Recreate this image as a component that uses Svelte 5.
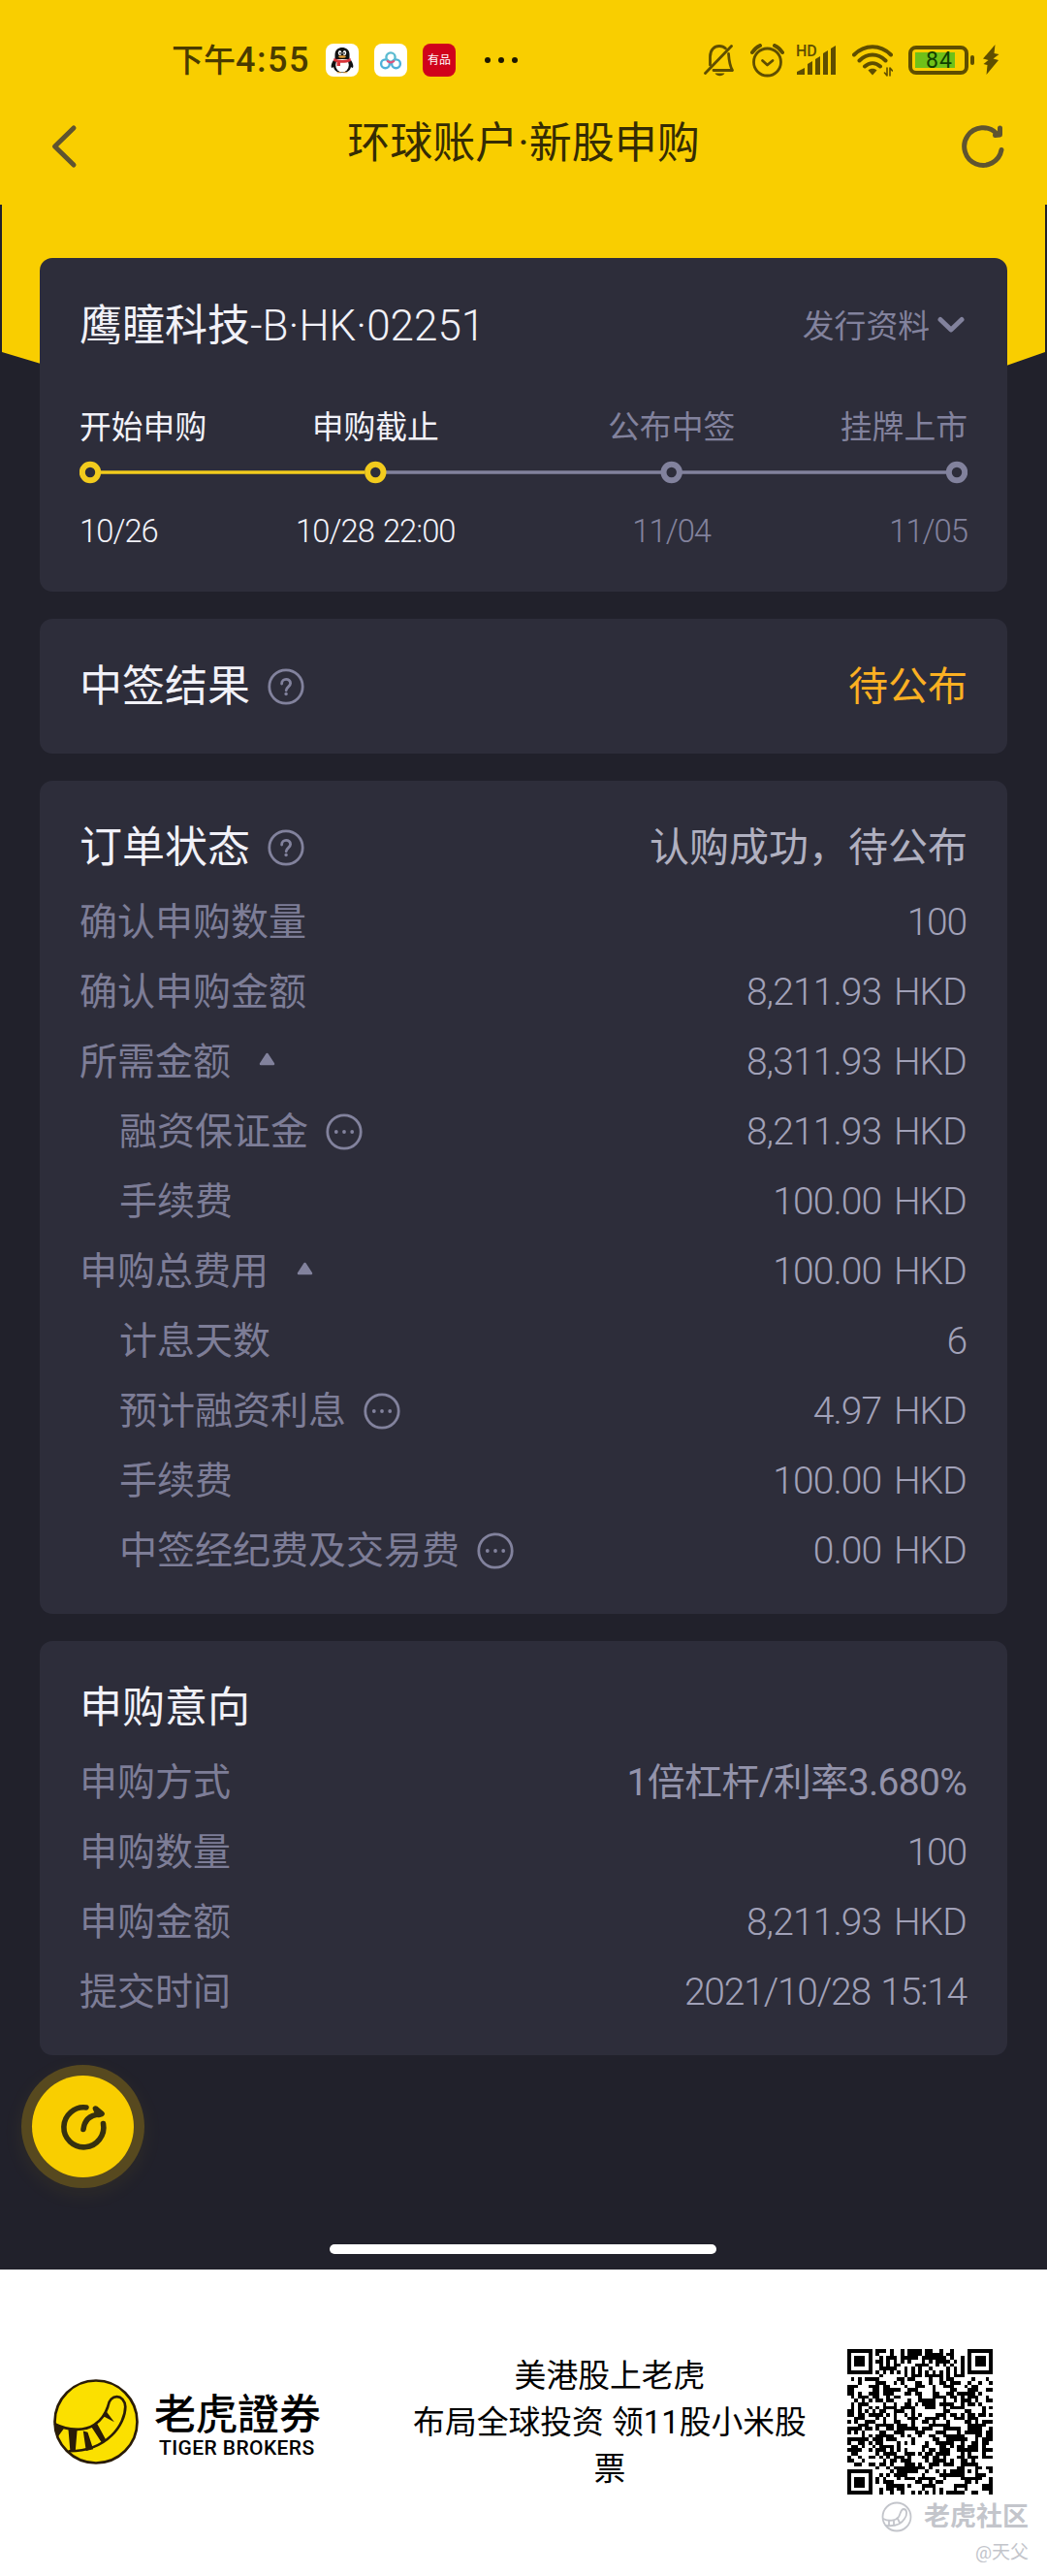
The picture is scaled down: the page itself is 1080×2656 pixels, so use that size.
<script lang="ts">
  interface Step {
    label: string;
    date: string;
    done: boolean;
  }

  interface Row {
    label: string;
    value: string;
    indent?: boolean;
    icon?: 'more' | 'fold';
    kind?: 'amount' | 'text';
  }

  const steps: Step[] = [
    { label: '开始申购', date: '10/26', done: true },
    { label: '申购截止', date: '10/28 22:00', done: true },
    { label: '公布中签', date: '11/04', done: false },
    { label: '挂牌上市', date: '11/05', done: false }
  ];

  const orderRows: Row[] = [
    { label: '确认申购数量', value: '100' },
    { label: '确认申购金额', value: '8,211.93 HKD', kind: 'amount' },
    { label: '所需金额', value: '8,311.93 HKD', kind: 'amount', icon: 'fold' },
    { label: '融资保证金', value: '8,211.93 HKD', kind: 'amount', indent: true, icon: 'more' },
    { label: '手续费', value: '100.00 HKD', kind: 'amount', indent: true },
    { label: '申购总费用', value: '100.00 HKD', kind: 'amount', icon: 'fold' },
    { label: '计息天数', value: '6', indent: true },
    { label: '预计融资利息', value: '4.97 HKD', kind: 'amount', indent: true, icon: 'more' },
    { label: '手续费', value: '100.00 HKD', kind: 'amount', indent: true },
    { label: '中签经纪费及交易费', value: '0.00 HKD', kind: 'amount', indent: true, icon: 'more' }
  ];

  const intentRows: Row[] = [
    { label: '申购方式', value: '1倍杠杆/利率3.680%', kind: 'text' },
    { label: '申购数量', value: '100' },
    { label: '申购金额', value: '8,211.93 HKD', kind: 'amount' },
    { label: '提交时间', value: '2021/10/28 15:14' }
  ];

  const QR_SIZE = 41;

  // square marker made of nested rings, null outside of it
  function marker(x: number, y: number, cx: number, cy: number, outer: number) {
    const d = Math.max(Math.abs(x - cx), Math.abs(y - cy));
    if (d > outer) return null;
    return outer === 4 ? d !== 4 && d !== 2 : d !== 1;
  }

  function isDark(x: number, y: number, noise: number) {
    const last = QR_SIZE - 4;
    const fixed =
      marker(x, y, 3, 3, 4) ??
      marker(x, y, last, 3, 4) ??
      marker(x, y, 3, last, 4) ??
      marker(x, y, 34, 34, 2);
    if (fixed !== null) return fixed;
    if (x === 6 || y === 6) return (x + y) % 2 === 0;
    return noise > 0.5;
  }

  function buildQr() {
    let seed = 2251;
    let path = '';
    for (let y = 0; y < QR_SIZE; y++) {
      for (let x = 0; x < QR_SIZE; x++) {
        seed = (seed * 48271) % 2147483647;
        if (isDark(x, y, seed / 2147483647)) path += `M${x} ${y}h1v1h-1z`;
      }
    }
    return path;
  }

  const qrPath = buildQr();
</script>

{#snippet helpIcon()}
  <svg class="round-icon" viewBox="0 0 38 38">
    <circle cx="19" cy="19" r="17.2" />
    <path d="M14.6 16c0-6 9-6 9-.4 0 3.4-4.4 3.6-4.4 7.2" />
    <circle class="dot" cx="19.1" cy="26.5" r="1.7" />
  </svg>
{/snippet}

{#snippet moreIcon()}
  <svg class="round-icon" viewBox="0 0 38 38">
    <circle cx="19" cy="19" r="17.2" />
    <circle class="dot" cx="10.8" cy="19" r="1.9" />
    <circle class="dot" cx="19" cy="19" r="1.9" />
    <circle class="dot" cx="27.2" cy="19" r="1.9" />
  </svg>
{/snippet}

{#snippet rowList(rows: Row[])}
  {#each rows as row}
    <div class="row">
      <span class="row-label" class:indent={row.indent}>
        {row.label}
        {#if row.icon === 'more'}
          {@render moreIcon()}
        {:else if row.icon === 'fold'}
          <svg class="fold-icon" viewBox="0 0 17 14">
            <path d="M8.5 2 15 12H2z" />
          </svg>
        {/if}
      </span>
      <span class="row-value" class:amount={row.kind === 'amount'} class:text={row.kind === 'text'}>
        {row.value}
      </span>
    </div>
  {/each}
{/snippet}

<div class="screen">
  <div class="hero"></div>

  <div class="status-bar">
    <div class="status-left">
      <span class="time">下午<b>4:55</b></span>
      <span class="app-icon">
        <svg viewBox="0 0 34 34">
          <path d="M8 17c-2 3-3 6-2 8 1 0 2-1 2-1 1 4 4 6 9 6s8-2 9-6c0 0 1 1 2 1 1-2 0-5-2-8z" fill="#111" />
          <ellipse cx="17" cy="22" rx="6.8" ry="7.4" fill="#fff" />
          <path d="M9.5 16V11c0-9.5 15-9.5 15 0v5z" fill="#111" />
          <ellipse cx="14.6" cy="9.5" rx="1.8" ry="2.5" fill="#fff" />
          <ellipse cx="19.4" cy="9.5" rx="1.8" ry="2.5" fill="#fff" />
          <circle cx="15" cy="9.8" r="0.9" fill="#111" />
          <circle cx="19" cy="9.8" r="0.9" fill="#111" />
          <ellipse cx="17" cy="13.5" rx="3.8" ry="1.2" fill="#e9a13a" />
          <path d="M8.5 15c5 2.5 12 2.5 17 0l.5 3c-3 1.5-7 2-11 1.8v3.2h-3.5v-4L8 18z" fill="#d8343a" />
          <path d="M12 29.8h3.5M18.5 29.8H22" stroke="#e9a13a" stroke-width="1" />
        </svg>
      </span>
      <span class="app-icon">
        <svg viewBox="0 0 34 34" fill="none" stroke-width="2.4">
          <circle cx="11.5" cy="20.8" r="4.4" stroke="#4fb0d8" />
          <circle cx="22.5" cy="20.8" r="4.4" stroke="#4fb0d8" />
          <circle cx="17" cy="14" r="4.6" stroke="#5bbbd0" />
          <path d="M13.8 18.2 17 19.5l3.2-1.3" stroke="#e0527c" stroke-width="2.2" />
        </svg>
      </span>
      <span class="app-icon youpin">有品</span>
      <span class="overflow"><i></i><i></i><i></i></span>
    </div>

    <div class="status-right">
      <svg class="bell" width="32" height="34" viewBox="0 0 32 34">
        <path d="M6.5 22V13.5C6.5 6 11 2.5 16 2.5c3 0 5 1 6.5 2.5M25.5 10.5c.5 7 1 12 4 17H10" />
        <path d="M1.5 30.5 28.5 2.5" />
        <path class="solid" d="M11.5 30.5h10c-2 3.5-8 3.5-10 0z" />
      </svg>
      <svg class="alarm" width="35" height="35" viewBox="0 0 35 35">
        <circle cx="17.5" cy="19" r="14" />
        <path d="m12.5 17.5 5 4.5 5.5-4.5" />
        <path class="thick" d="M2 9C4 6 6.5 3.5 10 2M33 9C31 6 28.5 3.5 25 2" />
      </svg>
      <span class="signal">
        <small>HD</small>
        <svg width="42" height="32" viewBox="0 0 42 32">
          <path d="M1 31v-3l8-4v7zM12 20l5-3v14h-5zM20 15l5-3v19h-5zM28 9l5-3v25h-5zM36 4l5-3v30h-5z" />
        </svg>
      </span>
      <svg class="wifi" width="42" height="34" viewBox="0 0 42 34">
        <path d="M2 11.5C13 .5 29 .5 40 11.5M7.5 17.5c8-8 19-8 27 0M13 23.5c5-4.5 11-4.5 16 0" />
        <path class="solid" d="M16.5 27.5c2-2.5 7-2.5 9 0L21 32.5z" />
        <path class="arrows" d="M36 25v8l-2.5-3M39 33v-8l2.5 3" />
      </svg>
      <span class="battery"><span class="charge">84</span></span>
      <svg class="bolt" width="18" height="32" viewBox="0 0 18 32">
        <path d="M13.5 0 1 14.5l5.5 1.5L1.5 20l4 1L4.5 31 17 16l-5.5-1.5L17.5 10l-5-1z" />
      </svg>
    </div>
  </div>

  <div class="nav">
    <svg width="30" height="46" viewBox="0 0 30 46">
      <path d="M25 4 5.5 23l19.5 19" />
    </svg>
    <h1>环球账户·新股申购</h1>
    <svg width="46" height="46" viewBox="0 0 46 46">
      <path d="M41 26.5A19.3 19.3 0 1 1 36 9.8" />
      <path d="M39.5 4v7l-5 .5" />
    </svg>
  </div>

  <main>
    <section class="card stock">
      <div class="stock-head">
        <h2>鹰瞳科技<span class="code">-B·HK·02251</span></h2>
        <span class="link">
          发行资料
          <svg width="28" height="18" viewBox="0 0 28 18"><path d="m3 3.5 11 10.5L25 3.5" /></svg>
        </span>
      </div>
      <div class="steps">
        {#each steps as step}
          <span class:done={step.done}>{step.label}</span>
        {/each}
      </div>
      <svg class="track" width="916" height="24" viewBox="0 0 916 24">
        <path class="done" d="M22 12H294" />
        <path d="M316 12H600M621 12H894" />
        <circle class="done" cx="11" cy="12" r="8.2" />
        <circle class="done" cx="305.3" cy="12" r="8.2" />
        <circle cx="610.7" cy="12" r="8.2" />
        <circle cx="905" cy="12" r="8.2" />
      </svg>
      <div class="steps dates">
        {#each steps as step}
          <span class:done={step.done}>{step.date}</span>
        {/each}
      </div>
    </section>

    <section class="card result">
      <h2>中签结果 {@render helpIcon()}</h2>
      <span class="state pending">待公布</span>
    </section>

    <section class="card">
      <div class="card-head">
        <h2>订单状态 {@render helpIcon()}</h2>
        <span class="state">认购成功，待公布</span>
      </div>
      {@render rowList(orderRows)}
    </section>

    <section class="card">
      <div class="card-head">
        <h2>申购意向</h2>
      </div>
      {@render rowList(intentRows)}
    </section>
  </main>

  <button class="fab" aria-label="切换">
    <svg width="52" height="52" viewBox="0 0 52 52">
      <path d="M29 6A20.5 20.5 0 1 0 46.5 22.5" />
      <path d="M26 28.5C27 20 32 14 42 13" />
      <path d="M38.5 7 45 12.5l-3.5 1z" />
    </svg>
  </button>

  <div class="home-bar"></div>
</div>

<footer>
  <svg class="logo" width="88" height="88" viewBox="0 0 263 263">
    <circle cx="131.5" cy="131.5" r="127" />
    <path d="M6 139c40 20 90 22 120 2 26-18 34-34 42-56 5-42 52-40 54 0 0 54-56 137-172 137" />
    <path class="stripe" d="M3 138l30 14-18 24zM46 152h28l-6 71H52zM92 160l14 4 17 52-22 5zM116 145l18-10 28 52-12 10zM150 112l12-14 26 34z" />
  </svg>
  <div class="brand">
    <strong>老虎證券</strong>
    <span>TIGER BROKERS</span>
  </div>
  <p>美港股上老虎<br />布局全球投资 领11股小米股票</p>
  <svg class="qr" width="150" height="150" viewBox="0 0 41 41" shape-rendering="crispEdges">
    <path d={qrPath} />
  </svg>
  <div class="watermark">
    <div class="community">
      <svg width="32" height="32" viewBox="0 0 32 32">
        <circle cx="16" cy="16" r="14.5" />
        <path d="M2 18c6 3 13 2 16-2 2-3 2-8 5-8 4 0 4 6 1 10-3 5-10 8-19 7M8 20v4M13 20v4M17 18l2 4" />
      </svg>
      老虎社区
    </div>
    <div class="author">@天父</div>
  </div>
</footer>

<style>
  :global(body) {
    margin: 0;
    background: #fff;
  }

  .screen,
  footer {
    width: 1080px;
    box-sizing: border-box;
    font-family: Roboto, 'Noto Sans CJK SC', sans-serif;
    font-weight: 400;
  }

  .screen {
    position: relative;
    display: flex;
    flex-direction: column;
    height: 2340px;
    background: #21212b;
    color: #f1f1f8;
  }

  /* yellow backdrop that runs behind the first card */
  .hero {
    position: absolute;
    inset: 0 0 auto;
    height: 520px;
    background: #f9ce00;
    clip-path: polygon(0 0, 100% 0, 100% 211px, 1078px 211px, 1078px 363px, 1038px 377px, 540px 520px, 42px 375px, 2px 363px, 2px 211px, 0 211px);
  }

  svg {
    flex: none;
    fill: none;
    stroke-linecap: round;
    stroke-linejoin: round;
  }

  h1,
  h2,
  p {
    margin: 0;
    font-weight: inherit;
  }

  .status-bar {
    position: relative;
    display: flex;
    justify-content: space-between;
    align-items: center;
    height: 124px;
    padding: 0 49px 0 177px;
  }

  .status-left,
  .status-right {
    display: flex;
    align-items: center;
  }

  .time {
    width: 142px;
    margin-right: 17px;
    color: #4a3b00;
    font-size: 33px;
    font-weight: 500;
    line-height: 40px;
    white-space: nowrap;
  }

  .time b {
    font-size: 36px;
    font-weight: 500;
    letter-spacing: 1.5px;
  }

  .app-icon {
    width: 34px;
    height: 34px;
    margin-right: 16px;
    border-radius: 8px;
    background: #fff;
  }

  .app-icon svg {
    display: block;
  }

  .youpin {
    background: #d0021b;
    color: #fff;
    font-size: 12px;
    line-height: 34px;
    text-align: center;
  }

  .overflow {
    display: flex;
    gap: 8px;
    margin-left: 14px;
  }

  .overflow i {
    width: 6px;
    height: 6px;
    border-radius: 50%;
    background: #1d1700;
  }

  .status-right svg {
    stroke: #5f4e00;
    stroke-width: 2.8;
  }

  .status-right .solid,
  .bolt path,
  .signal path {
    fill: #5f4e00;
    stroke: none;
  }

  .alarm {
    margin-left: 16px;
  }

  .thick {
    stroke-width: 4;
  }

  .signal {
    position: relative;
    width: 42px;
    height: 32px;
    margin-left: 12px;
  }

  .signal small {
    position: absolute;
    left: 0;
    top: -1px;
    color: #5f4e00;
    font-size: 16px;
    font-weight: 500;
    line-height: 16px;
  }

  .wifi {
    margin-left: 16px;
  }

  .status-right .wifi {
    stroke-width: 4;
  }

  .wifi .arrows {
    stroke-width: 1.6;
  }

  .battery {
    position: relative;
    width: 62px;
    height: 30px;
    margin: 0 14px 0 16px;
    padding: 3px;
    box-sizing: border-box;
    border: 4px solid #5f4e00;
    border-radius: 8px;
  }

  .battery::after {
    content: '';
    position: absolute;
    right: -10px;
    top: 6px;
    width: 4px;
    height: 10px;
    border-radius: 2px;
    background: #5f4e00;
  }

  .charge {
    display: block;
    width: 41px;
    height: 16px;
    padding-left: 11px;
    box-sizing: border-box;
    background: #6fc119;
    color: #114000;
    font-size: 23px;
    letter-spacing: 1px;
    line-height: 18px;
  }

  .nav {
    position: relative;
    display: flex;
    justify-content: space-between;
    align-items: center;
    height: 54px;
    padding: 0 42px 0 51px;
  }

  .nav svg {
    stroke: #5f5430;
    stroke-width: 5;
  }

  .nav h1 {
    padding: 0 0 5px 7px;
    color: #352c04;
    font-size: 44px;
    line-height: 45px;
  }

  main {
    position: relative;
    display: flex;
    flex-direction: column;
    gap: 28px;
    padding: 88px 41px 0;
  }

  .card {
    padding: 28px 41px 29px;
    border-radius: 13px;
    background: #2d2d3a;
  }

  h2 {
    display: flex;
    align-items: center;
    font-size: 44px;
    line-height: 60px;
  }

  .round-icon {
    width: 38px;
    height: 38px;
    margin-left: 18px;
    stroke: #82829d;
    stroke-width: 2.8;
  }

  .round-icon .dot {
    fill: #82829d;
    stroke: none;
  }

  .stock {
    height: 344px;
    padding-top: 40px;
    padding-bottom: 0;
    box-sizing: border-box;
  }

  .stock-head {
    display: flex;
    justify-content: space-between;
    align-items: center;
    height: 60px;
  }

  .code {
    font-weight: 300;
  }

  .link {
    display: flex;
    align-items: center;
    gap: 8px;
    padding: 0 3px 5px 0;
    color: #82829d;
    font-size: 32.8px;
  }

  .link svg {
    margin-top: 3px;
    stroke: #82829d;
    stroke-width: 5;
  }

  .steps {
    display: grid;
    grid-template-columns: 1fr 2fr 2fr 1fr;
    height: 48px;
    margin-top: 51px;
    color: #82829d;
    font-size: 32.8px;
    line-height: 48px;
    text-align: center;
    white-space: nowrap;
  }

  .steps span:first-child {
    text-align: left;
  }

  .steps span:last-child {
    text-align: right;
  }

  .steps .done {
    color: #f1f1f8;
  }

  .dates {
    margin-top: 25px;
    font-weight: 300;
    letter-spacing: -1px;
    word-spacing: 2px;
  }

  .track {
    display: block;
    margin-top: 10px;
    stroke: #82829d;
    stroke-width: 3.5;
    stroke-linecap: butt;
  }

  .track .done {
    stroke: #f2cb1d;
  }

  .track circle {
    stroke-width: 6;
  }

  .result {
    display: flex;
    justify-content: space-between;
    align-items: center;
    height: 139px;
    padding-top: 0;
    padding-bottom: 0;
  }

  .card-head {
    display: flex;
    justify-content: space-between;
    align-items: center;
    height: 82px;
  }

  .state {
    color: #b0b0c0;
    font-size: 41px;
    line-height: 60px;
  }

  .pending {
    color: #fbb022;
  }

  .row {
    display: flex;
    justify-content: space-between;
    align-items: center;
    height: 72px;
    font-size: 39px;
    line-height: 56px;
    white-space: nowrap;
  }

  .row-label {
    display: flex;
    align-items: center;
    color: #7d7d97;
  }

  .indent {
    padding-left: 41px;
  }

  .row-value {
    padding-right: 1px;
    color: #a1a1b8;
    font-weight: 300;
    letter-spacing: -1.2px;
    word-spacing: 2px;
  }

  .amount {
    letter-spacing: -0.9px;
    word-spacing: 4px;
  }

  .text {
    color: #9393ab;
    font-weight: 400;
    letter-spacing: -0.7px;
  }

  .fold-icon {
    width: 17px;
    height: 14px;
    margin: 0 0 6px 29px;
    fill: #82829d;
    stroke: #82829d;
    stroke-width: 2.5;
  }

  .fab {
    position: absolute;
    left: 33px;
    top: 2140px;
    display: flex;
    justify-content: center;
    align-items: center;
    width: 105px;
    height: 105px;
    padding: 0;
    border: 0;
    border-radius: 50%;
    background: #f9ce00;
    box-shadow: 0 0 0 11px #57491f, 0 6px 24px 8px rgba(249, 206, 0, 0.08);
  }

  .fab svg {
    stroke: #36300f;
    stroke-width: 5.6;
  }

  .home-bar {
    width: 399px;
    height: 10px;
    margin: auto auto 16px 340px;
    border-radius: 5px;
    background: #fff;
  }

  footer {
    position: relative;
    display: flex;
    height: 316px;
    padding: 82px 56px 0 55px;
    background: #fff;
    color: #000;
  }

  .logo {
    margin-top: 31px;
    fill: #fbe000;
    stroke: #2a1c08;
    stroke-width: 8;
  }

  .logo .stripe {
    fill: #2a1c08;
    stroke: none;
  }

  .brand {
    display: flex;
    flex-direction: column;
    width: 172px;
    margin: 39px 0 0 16px;
  }

  .brand strong {
    font-family: 'Noto Sans CJK TC', sans-serif;
    font-size: 43px;
    font-weight: 500;
    line-height: 50px;
    white-space: nowrap;
  }

  .brand span {
    padding-left: 5px;
    font-size: 21px;
    font-weight: 500;
    letter-spacing: 0.4px;
    line-height: 26px;
    white-space: nowrap;
  }

  footer p {
    width: 412px;
    margin: 4px auto 0 92px;
    font-size: 32.8px;
    line-height: 48px;
    text-align: center;
  }

  .qr {
    fill: #000;
  }

  .watermark {
    position: absolute;
    right: 19px;
    bottom: 7px;
    display: flex;
    flex-direction: column;
    align-items: flex-end;
    color: #c3c5cb;
  }

  .community {
    display: flex;
    align-items: center;
    gap: 12px;
    font-size: 27px;
    font-weight: 700;
    line-height: 40px;
  }

  .community svg {
    stroke: #c3c5cb;
    stroke-width: 1.8;
  }

  .author {
    font-size: 19px;
    line-height: 34px;
  }
</style>
